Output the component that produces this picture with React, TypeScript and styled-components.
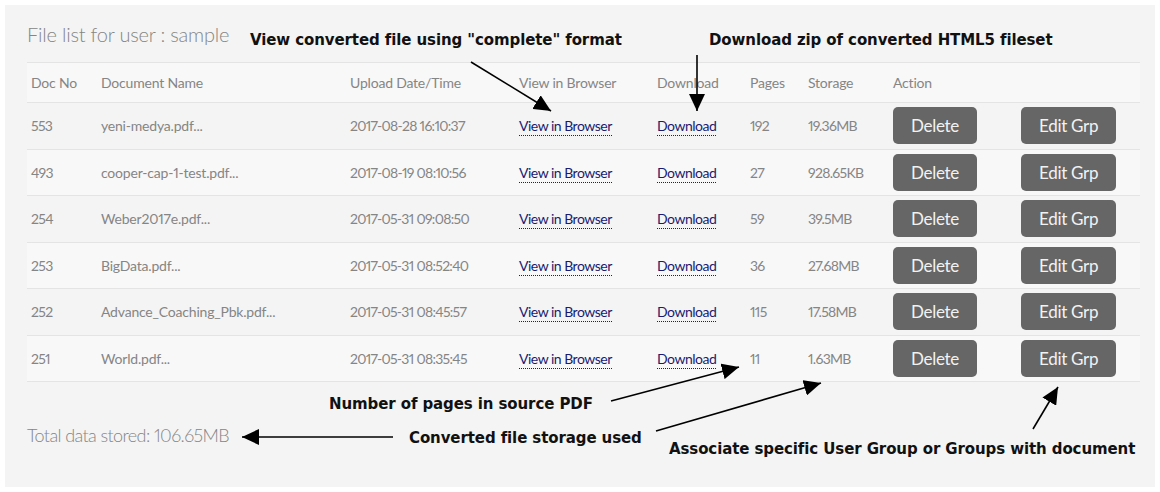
import React from 'react'
import styled, { createGlobalStyle } from 'styled-components'

const GlobalStyle = createGlobalStyle`
  html, body {
    margin: 0;
    padding: 0;
    background: #fff;
  }
`

const rows = [
  { no: '553', name: 'yeni-medya.pdf...', date: '2017-08-28 16:10:37', pages: '192', storage: '19.36MB' },
  { no: '493', name: 'cooper-cap-1-test.pdf...', date: '2017-08-19 08:10:56', pages: '27', storage: '928.65KB' },
  { no: '254', name: 'Weber2017e.pdf...', date: '2017-05-31 09:08:50', pages: '59', storage: '39.5MB' },
  { no: '253', name: 'BigData.pdf...', date: '2017-05-31 08:52:40', pages: '36', storage: '27.68MB' },
  { no: '252', name: 'Advance_Coaching_Pbk.pdf...', date: '2017-05-31 08:45:57', pages: '115', storage: '17.58MB' },
  { no: '251', name: 'World.pdf...', date: '2017-05-31 08:35:45', pages: '11', storage: '1.63MB' },
]

const colWidths = [70, 249, 169, 138, 93, 58, 85, 128, 123]

const notes = [
  { text: 'View converted file using "complete" format', x: 250, y: 31 },
  { text: 'Download zip of converted HTML5 fileset', x: 709, y: 31 },
  { text: 'Number of pages in source PDF', x: 329, y: 395 },
  { text: 'Converted file storage used', x: 409, y: 429 },
  { text: 'Associate specific User Group or Groups with document', x: 669, y: 440 },
]

const arrows = [
  { x1: 471, y1: 62, x2: 551, y2: 111 },
  { x1: 697, y1: 55, x2: 697, y2: 111 },
  { x1: 611, y1: 401, x2: 739, y2: 367 },
  { x1: 656, y1: 431, x2: 821, y2: 383 },
  { x1: 1033, y1: 429, x2: 1058, y2: 387 },
  { x1: 393, y1: 437, x2: 242, y2: 437 },
]

const App = () => {
  return (
    <>
      <GlobalStyle />
      <Panel>
        <Title>File list for user : sample</Title>
        <Table>
          <colgroup>
            {colWidths.map((w, i) => (
              <col key={i} style={{ width: w }} />
            ))}
          </colgroup>
          <thead>
            <tr>
              <Th>Doc No</Th>
              <Th>Document Name</Th>
              <Th>Upload Date/Time</Th>
              <Th>View in Browser</Th>
              <Th>Download</Th>
              <Th>Pages</Th>
              <Th>Storage</Th>
              <Th>Action</Th>
              <Th />
            </tr>
          </thead>
          <tbody>
            {rows.map(r => (
              <Row key={r.no}>
                <Td $num>{r.no}</Td>
                <Td>{r.name}</Td>
                <Td $num>{r.date}</Td>
                <Td>
                  <Link href="#">View in Browser</Link>
                </Td>
                <Td>
                  <Link href="#">Download</Link>
                </Td>
                <Td $num>{r.pages}</Td>
                <Td $num>{r.storage}</Td>
                <Td>
                  <Button>Delete</Button>
                </Td>
                <Td>
                  <Button>Edit Grp</Button>
                </Td>
              </Row>
            ))}
          </tbody>
        </Table>
        <Total>Total data stored: 106.65MB</Total>

        {notes.map(n => (
          <Note key={n.text} $x={n.x} $y={n.y}>
            {n.text}
          </Note>
        ))}
        <Arrows viewBox="5 5 1150 482" width="1150" height="482">
          <defs>
            <marker
              id="head"
              markerUnits="userSpaceOnUse"
              markerWidth="18"
              markerHeight="16"
              refX="17"
              refY="8"
              orient="auto"
            >
              <path d="M0 0 L17 8 L0 16 Z" fill="#000" />
            </marker>
          </defs>
          {arrows.map((a, i) => (
            <line key={i} {...a} stroke="#000" strokeWidth="1.6" markerEnd="url(#head)" />
          ))}
        </Arrows>
      </Panel>
    </>
  )
}

const Panel = styled.div`
  position: relative;
  box-sizing: border-box;
  margin: 5px;
  width: 1150px;
  height: 482px;
  padding: 17px 15px 0 22px;
  background: #f4f4f4;
  font-family: 'Lato', 'Helvetica', 'Arial', sans-serif;
  font-variant-numeric: proportional-nums;
  color: #858585;
`
const Title = styled.div`
  font-size: 20px;
  font-weight: 300;
  line-height: 24px;
  margin-bottom: 16px;
  letter-spacing: -0.2px;
`
const Table = styled.table`
  width: 1113px;
  border-collapse: collapse;
  table-layout: fixed;
  font-size: 14px;
`
const Th = styled.th`
  height: 39px;
  padding: 0 4px;
  text-align: left;
  font-weight: 400;
  letter-spacing: -0.2px;
  background: #f8f8f8;
  border-top: 1px solid #e4e4e4;
  border-bottom: 1px solid #e4e4e4;
`
const Row = styled.tr`
  background: #f4f4f4;
  &:nth-child(even) {
    background: #f8f8f8;
  }
`
const Td = styled.td<{ $num?: boolean }>`
  height: 45.5px;
  padding: 0 4px;
  border-bottom: 1px solid #e4e4e4;
  white-space: nowrap;
  letter-spacing: ${p => (p.$num ? '-0.7px' : '-0.2px')};
`
const Link = styled.a`
  color: #1b1b70;
  text-decoration: none;
  border-bottom: 1px dotted #1b1b70;
  padding-bottom: 1px;
  letter-spacing: -0.5px;
`
const Button = styled.button`
  height: 37px;
  padding: 0 18px;
  border: none;
  border-radius: 5px;
  background: #666;
  color: #f2f2f2;
  font-family: inherit;
  font-size: 17px;
  font-weight: 400;
  letter-spacing: -0.3px;
`
const Total = styled.div`
  margin-top: 42px;
  font-size: 18px;
  font-weight: 300;
  line-height: 22px;
  letter-spacing: -0.6px;
`
const Note = styled.div<{ $x: number; $y: number }>`
  position: absolute;
  left: ${p => p.$x - 5}px;
  top: ${p => p.$y - 5}px;
  font-family: 'DejaVu Sans', Verdana, sans-serif;
  font-weight: bold;
  font-size: 15px;
  letter-spacing: -0.1px;
  color: #111;
  white-space: nowrap;
`
const Arrows = styled.svg`
  position: absolute;
  left: 0;
  top: 0;
  pointer-events: none;
`

export default App
